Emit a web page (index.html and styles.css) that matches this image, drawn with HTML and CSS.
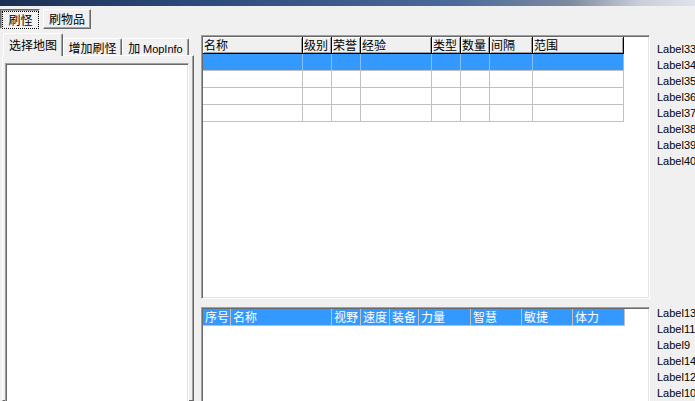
FILE: index.html
```html
<!DOCTYPE html>
<html lang="zh">
<head>
    <meta charset="UTF-8">
    <title>刷怪</title>
    <link rel="stylesheet" href="styles.css">
</head>
<body>
    <div class="titlebar"></div>

    <div class="toolbar">
        <button class="btn btn-checked"><span class="focus">刷怪</span></button>
        <button class="btn btn-wide">刷物品</button>
    </div>

    <div class="main">
        <!-- left tab control -->
        <div class="tabs">
            <div class="tab-strip">
                <div class="tab tab-active">选择地图</div>
                <div class="tab tab-add">增加刷怪</div>
                <div class="tab tab-mop">加 <span class="latin">MopInfo</span></div>
            </div>
            <div class="tab-panel">
                <div class="listbox"></div>
            </div>
        </div>

        <div class="right">
            <div class="row row-top">
                <div class="listview lv-top">
                    <div class="lv-head">
                        <div class="hd">名称</div>
                        <div class="hd">级别</div>
                        <div class="hd">荣誉</div>
                        <div class="hd">经验</div>
                        <div class="hd">类型</div>
                        <div class="hd">数量</div>
                        <div class="hd">间隔</div>
                        <div class="hd">范围</div>
                    </div>
                    <div class="lv-row selected">
                        <div></div><div></div><div></div><div></div><div></div><div></div><div></div><div></div>
                    </div>
                    <div class="lv-row">
                        <div></div><div></div><div></div><div></div><div></div><div></div><div></div><div></div>
                    </div>
                    <div class="lv-row">
                        <div></div><div></div><div></div><div></div><div></div><div></div><div></div><div></div>
                    </div>
                    <div class="lv-row">
                        <div></div><div></div><div></div><div></div><div></div><div></div><div></div><div></div>
                    </div>
                </div>
                <ul class="labels">
                    <li>Label33</li>
                    <li>Label34</li>
                    <li>Label35</li>
                    <li>Label36</li>
                    <li>Label37</li>
                    <li>Label38</li>
                    <li>Label39</li>
                    <li>Label40</li>
                </ul>
            </div>

            <div class="row row-bottom">
                <div class="listview lv-bottom">
                    <div class="lv-head2">
                        <div class="hd2">序号</div>
                        <div class="hd2">名称</div>
                        <div class="hd2">视野</div>
                        <div class="hd2">速度</div>
                        <div class="hd2">装备</div>
                        <div class="hd2">力量</div>
                        <div class="hd2">智慧</div>
                        <div class="hd2">敏捷</div>
                        <div class="hd2">体力</div>
                    </div>
                </div>
                <ul class="labels">
                    <li>Label13</li>
                    <li>Label11</li>
                    <li>Label9</li>
                    <li>Label14</li>
                    <li>Label12</li>
                    <li>Label10</li>
                </ul>
            </div>
        </div>
    </div>
</body>
</html>
```

FILE: styles.css
```css
/* classic windows form look */
* {
    box-sizing: border-box;
}

body {
    margin: 0;
    height: 401px;
    overflow: hidden;
    background-color: #f0f0f0;
    color: #000;
    font-family: "Noto Sans CJK SC", sans-serif;
    font-size: 12px;
}

.titlebar {
    height: 6px;
    background: linear-gradient(to right, #1c2f52 0%, #2d4c7e 30%, #4a6a9a 65%, #7d8aa0 82%, #c9ced8 92%, #dfe3ea 100%);
}

/* top buttons */
.toolbar {
    display: flex;
    gap: 3px;
    padding-top: 3px;
}

.btn {
    width: 40px;
    height: 20px;
    padding: 0;
    font: inherit;
    line-height: 16px;
    color: #000;
    background-color: #f0f0f0;
    border: 1px solid;
    border-color: #fff #696969 #696969 #fff;
    box-shadow: inset -1px -1px #a0a0a0;
}

.btn-wide {
    width: 48px;
}

.btn-checked {
    border-color: #696969 #fff #fff #696969;
    box-shadow: inset 1px 1px #a0a0a0;
    background: repeating-conic-gradient(#fff 0 25%, #e6e6e6 0 50%) 0 0 / 2px 2px;
}

.btn-checked .focus {
    display: block;
    margin: 1px 1px 0 2px;
    height: 16px;
    outline: 1px dotted #000;
}

/* tab control */
.main {
    display: flex;
    margin-top: 4px;
    padding-left: 2px;
}

.tabs {
    flex-shrink: 0;
    width: 192px;
}

.tab-strip {
    display: flex;
    align-items: flex-end;
    height: 22px;
    padding-left: 1px;
}

.tab {
    height: 17px;
    padding-top: 1px;
    text-align: center;
    line-height: 16px;
    border: 1px solid;
    border-bottom: none;
    border-color: #fff #696969 transparent #fff;
    border-radius: 2px 2px 0 0;
    box-shadow: inset -1px 0 #a0a0a0;
}

.tab-active {
    position: relative;
    z-index: 1;
    width: 60px;
    height: 23px;
    margin-bottom: -1px;
    padding-top: 3px;
    background-color: #f0f0f0;
}

.tab-add {
    width: 59px;
}

.tab-mop {
    width: 67px;
}

.latin {
    font-family: "Liberation Sans", sans-serif;
    font-size: 11px;
}

.tab-panel {
    height: 346px;
    padding: 7px 4px 0 2px;
    border: 1px solid;
    border-color: #fff #696969 #696969 #fff;
    box-shadow: inset -1px 0 #a0a0a0;
}

.listbox {
    height: 400px;
    background-color: #fff;
    border: 1px solid;
    border-color: #a0a0a0 #fff #fff #a0a0a0;
    box-shadow: inset 1px 1px #696969, inset -1px -1px #e3e3e3;
}

/* right side list views */
.right {
    flex-shrink: 0;
    display: flex;
    flex-direction: column;
    margin-left: 7px;
    padding-top: 2px;
}

.row {
    display: flex;
}

.row-bottom {
    margin-top: 8px;
}

.listview {
    flex-shrink: 0;
    width: 449px;
    background-color: #fff;
    border: 1px solid;
    border-color: #a0a0a0 #fff #fff #a0a0a0;
    box-shadow: inset 1px 1px #696969, inset -1px -1px #e3e3e3;
}

.lv-top {
    height: 264px;
    padding: 1px 0 0 1px;
}

.lv-bottom {
    height: 200px;
    padding: 1px 0 0 1px;
}

.lv-head,
.lv-row {
    display: grid;
    grid-template-columns: 100px 29px 29px 71px 29px 29px 43px 91px;
    width: 421px;
}

.hd {
    height: 17px;
    padding-left: 1px;
    line-height: 16px;
    white-space: nowrap;
    overflow: hidden;
    background-color: #f0f0f0;
    border-right: 1px solid #000;
    border-bottom: 1px solid #000;
    box-shadow: inset 1px 1px #fff, inset -1px -1px #a0a0a0;
}

.lv-row div {
    height: 17px;
    border-right: 1px solid #c0c0c0;
    border-bottom: 1px solid #c0c0c0;
}

.lv-row.selected div {
    background-color: #3399ff;
    border-right-color: #86bdf2;
}

.lv-head2 {
    display: grid;
    grid-template-columns: 28px 101px 29px 29px 29px 52px 51px 51px 52px;
    width: 422px;
}

.hd2 {
    height: 17px;
    padding-left: 2px;
    line-height: 16px;
    color: #fff;
    white-space: nowrap;
    background-color: #3399ff;
    border-right: 1px solid #c0c0c0;
    border-bottom: 1px solid #c0c0c0;
}

.labels {
    flex-shrink: 0;
    margin: 0 0 0 7px;
    padding: 6px 0 0 0;
    list-style: none;
    font-family: "Liberation Sans", sans-serif;
    font-size: 11px;
    line-height: 16px;
}

.row-bottom .labels {
    padding-top: 0;
    margin-top: -2px;
}
```
